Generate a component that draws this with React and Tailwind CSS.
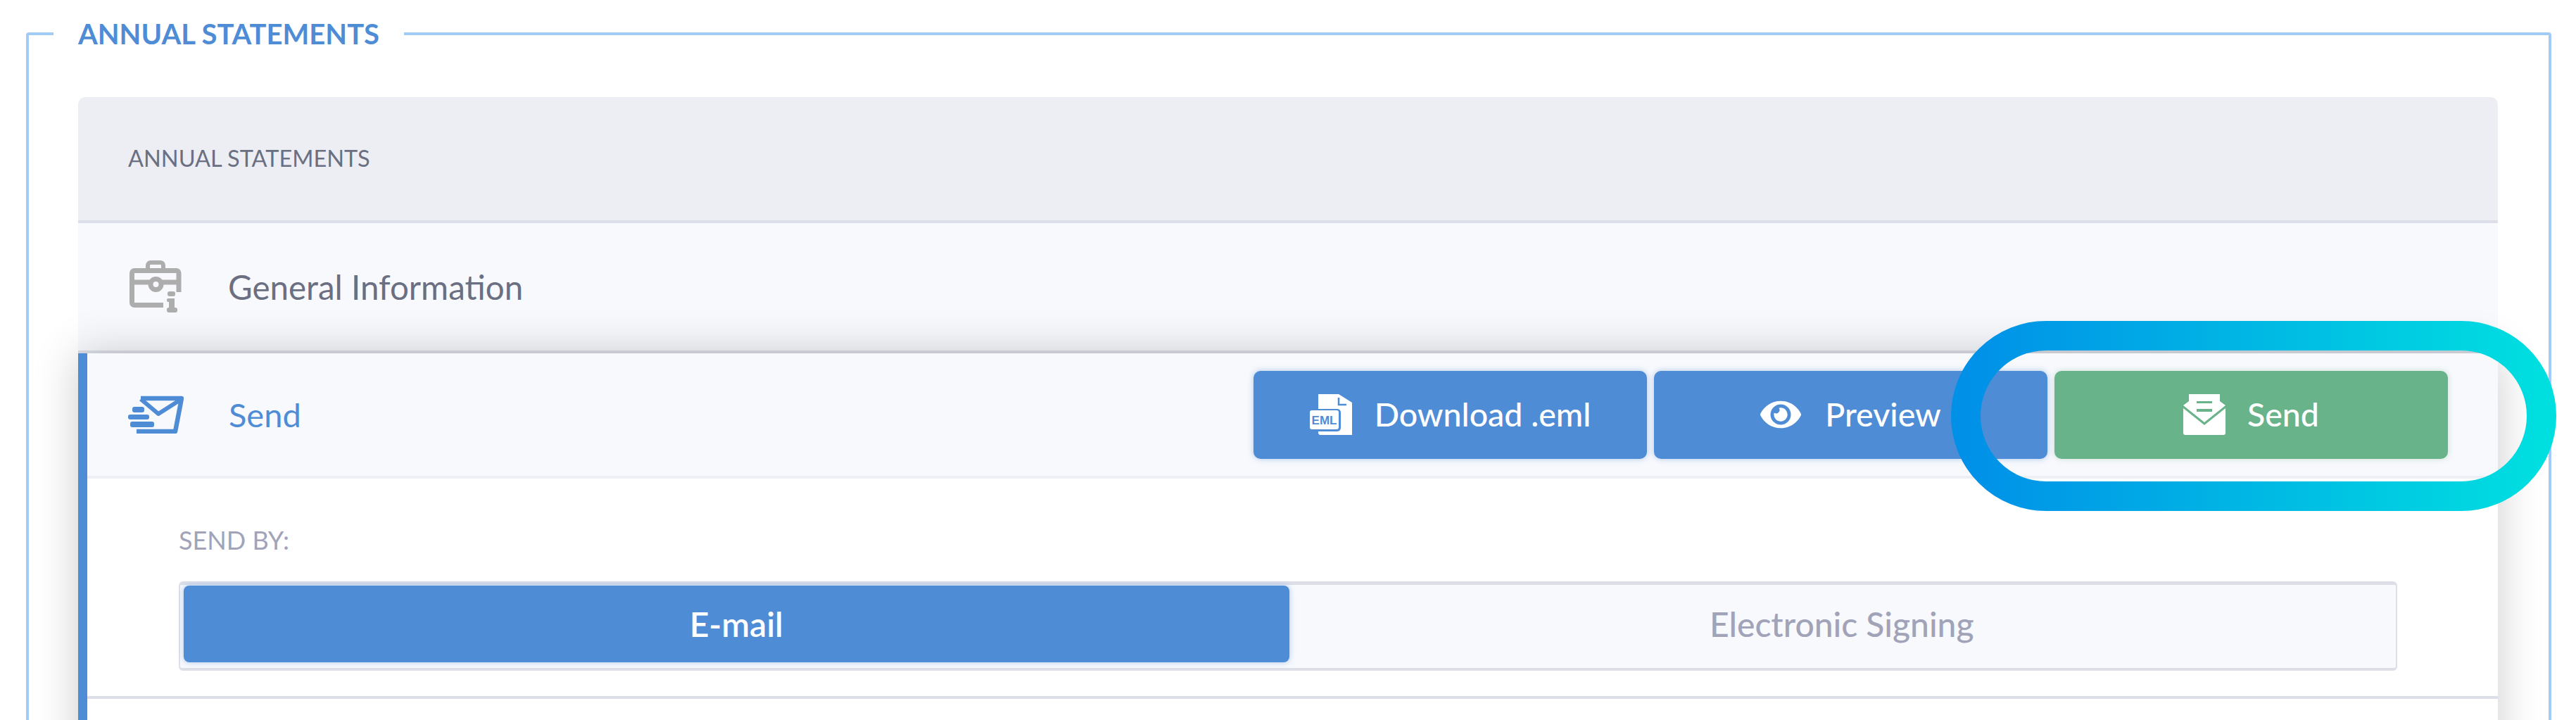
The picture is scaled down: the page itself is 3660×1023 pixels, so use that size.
import React from 'react';
import { FaEye } from 'react-icons/fa';

const BriefcaseIcon = () => (
    <svg width="75" height="75" viewBox="0 0 75 75" fill="none" stroke="#adadad" strokeWidth="7">
        <path d="M48 63.5H7a3.5 3.5 0 0 1-3.5-3.5V18A3.5 3.5 0 0 1 7 14.5h59.5A3.5 3.5 0 0 1 70 18v27" />
        <path d="M3.5 31H70" />
        <path d="M26 12V7a4 4 0 0 1 4-4h14a4 4 0 0 1 4 4v5" strokeWidth="6" />
        <circle cx="37.5" cy="34" r="7.5" fill="#f8f9fd" />
        <g fill="#adadad" stroke="none">
            <rect x="54" y="44" width="11" height="7" rx="3" />
            <rect x="56" y="54" width="8" height="18" />
            <rect x="53" y="67" width="15" height="7" rx="3" />
            <rect x="53" y="54" width="8" height="5" rx="2" />
        </g>
    </svg>
);

const SendMailIcon = () => (
    <svg width="79" height="54" viewBox="0 0 79 54" fill="#4f8cd6">
        <path d="M18 4H76L67 51H12" fill="none" stroke="#4f8cd6" strokeWidth="6.5" strokeLinejoin="round" />
        <path d="M18 5L43 26L76 5" fill="none" stroke="#4f8cd6" strokeWidth="6" strokeLinejoin="round" />
        <rect x="6" y="16" width="17" height="8" rx="3" />
        <rect x="0" y="27" width="30" height="7" rx="3" />
        <rect x="3" y="37" width="34" height="8" rx="3" />
    </svg>
);

const EmlIcon = () => (
    <svg width="60" height="59" viewBox="0 0 60 59">
        <path d="M12 0H41L60 12V58H14L12 56Z" fill="#ffffff" />
        <path d="M41 5V15H52" fill="none" stroke="#4f8cd6" strokeWidth="2.5" />
        <rect x="-2" y="21" width="46" height="32" rx="5" fill="#4f8cd6" />
        <rect x="0" y="23" width="41" height="27" rx="3" fill="#ffffff" />
        <text x="20.5" y="43" textAnchor="middle" fontFamily="Liberation Sans, sans-serif" fontWeight="700" fontSize="17" fill="#4f8cd6">EML</text>
    </svg>
);

const OpenMailIcon = () => (
    <svg width="60" height="59" viewBox="0 0 60 59" fill="#ffffff">
        <path d="M8 0H52V10L60 16L30 40L0 16L8 10Z" />
        <path d="M0 20L30 44L60 20V55a3 3 0 0 1-3 3H3a3 3 0 0 1-3-3Z" />
        <rect x="19" y="10" width="22" height="3" fill="#69b38a" />
        <rect x="19" y="21" width="22" height="4" fill="#69b38a" />
    </svg>
);

const Highlight = () => (
    <svg className="absolute left-[2772px] top-[456px]" width="860" height="270" viewBox="0 0 860 270" fill="none">
        <defs>
            <linearGradient id="ring" x1="0" y1="0" x2="1" y2="0">
                <stop offset="0" stopColor="#0090e8" />
                <stop offset="1" stopColor="#00dfe0" />
            </linearGradient>
        </defs>
        <rect x="21" y="21" width="818" height="228" rx="114" stroke="url(#ring)" strokeWidth="42" />
    </svg>
);

const ActionButton = ({ className, icon, children, gap }) => (
    <button className={`flex h-[125px] w-[559px] items-center justify-center rounded-[10px] text-[46.5px] font-medium text-white ${gap} ${className}`}>
        {icon}
        {children}
    </button>
);

const App = () => {
    return (
        <div className="relative h-[1023px] overflow-hidden bg-white font-[Lato,sans-serif]">
            <fieldset className="mt-6 ml-[37px] mr-[35px] h-[1400px] rounded-[4px] border-4 border-[#a3cbf7]">
                <legend className="ml-[35px] px-[35px] text-[40px] leading-[48px] font-bold text-[#4f8cd6]">ANNUAL STATEMENTS</legend>
                <div className="mt-[66px] ml-[70px] mr-[72px]">
                    <div className="flex h-[179px] items-center rounded-t-[10px] border-b-4 border-[#dddfe8] bg-[#edeef3] pl-[71px] text-[32.5px] text-[#6b6f82]">
                        ANNUAL STATEMENTS
                    </div>
                    <div className="flex h-[185px] items-center gap-[65px] border-b-4 border-[#dddfe8] bg-[#f8f9fd] pl-[73px] text-[47.5px] text-[#6b6f82]">
                        <BriefcaseIcon />
                        <span>General Information</span>
                    </div>
                    <div className="relative border-l-[13px] border-[#4f8cd6] bg-white shadow-[0_0_60px_rgba(0,0,0,0.2)]">
                        <div className="flex h-[178px] items-center justify-between border-b-4 border-[#eeeff4] bg-[#f8f9fd] pr-[71px] pl-[58px]">
                            <div className="flex items-center gap-[64px] text-[47px] text-[#4f8cd6]">
                                <SendMailIcon />
                                <span>Send</span>
                            </div>
                            <div className="flex gap-[10px]">
                                <ActionButton className="bg-[#4f8cd6] shadow-[0_0_8px_rgba(79,140,214,0.45)]" gap="gap-[32px]" icon={<EmlIcon />}>Download .eml</ActionButton>
                                <ActionButton className="bg-[#4f8cd6] shadow-[0_0_8px_rgba(79,140,214,0.45)]" gap="gap-[34px]" icon={<FaEye size={58} />}>Preview</ActionButton>
                                <ActionButton className="bg-[#69b38a] shadow-[0_0_8px_rgba(105,179,138,0.35)]" gap="gap-[31px]" icon={<OpenMailIcon />}>Send</ActionButton>
                            </div>
                        </div>
                        <div className="h-[313px] border-b-4 border-[#dddfe8] pt-[64px] pr-[143px] pl-[130px]">
                            <div className="text-[36px] leading-[46px] text-[#a1a4b8]">SEND BY:</div>
                            <div className="mt-[36px] flex h-[127px] rounded-[6px] border-2 border-t-[5px] border-b-4 border-[#dddfe8] bg-[#f8f9fd] pt-px pr-[2px] pb-2 pl-[5px] text-[48px]">
                                <div className="flex flex-1 items-center justify-center rounded-[8px] bg-[#4f8cd6] font-semibold text-white shadow-[0_0_8px_rgba(79,140,214,0.45)]">E-mail</div>
                                <div className="flex flex-1 items-center justify-center font-medium text-[#a1a4b8]">Electronic Signing</div>
                            </div>
                        </div>
                        <div className="h-[300px]" />
                    </div>
                </div>
            </fieldset>
            <Highlight />
        </div>
    );
};

export default App;
